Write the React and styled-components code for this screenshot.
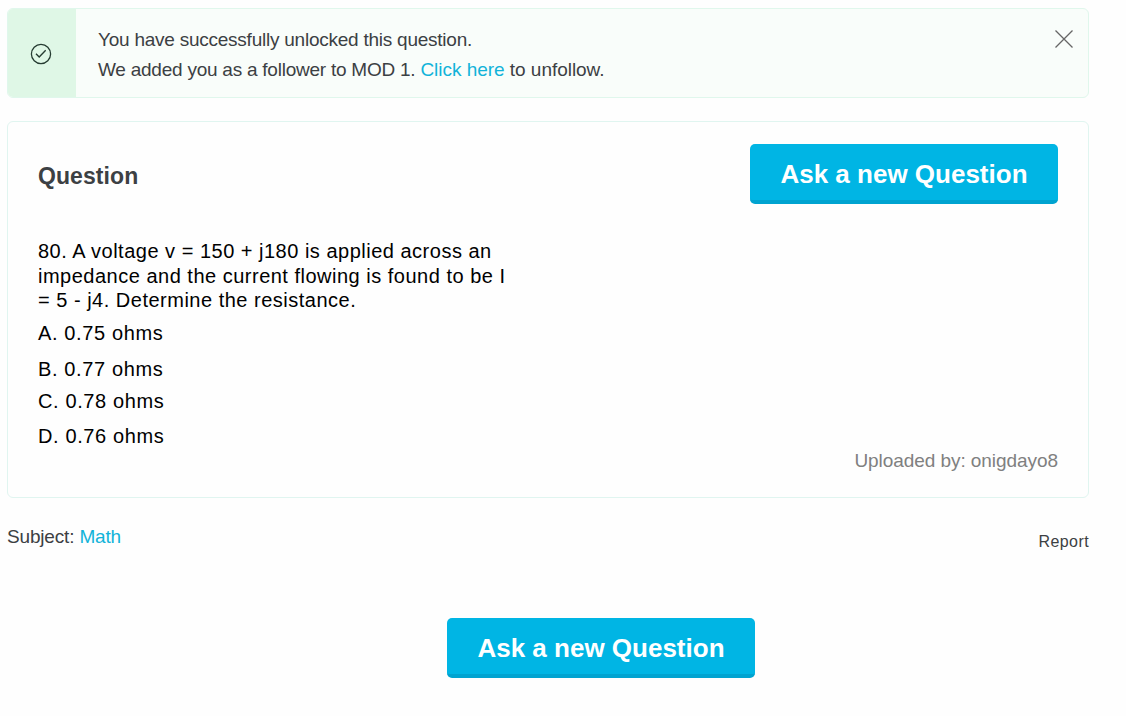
import React, { useState } from 'react'
import styled, { createGlobalStyle } from 'styled-components'

const GlobalStyle = createGlobalStyle`
  * {
    box-sizing: border-box;
  }
  body {
    margin: 0;
    background-color: #fefefe;
    color: #3c4043;
    font-family: 'Liberation Sans', Arial, sans-serif;
    font-size: 19px;
  }
`
const Page = styled.main`
  width: 1082px;
  margin: 8px 0 0 7px;
`
const Alert = styled.section`
  display: flex;
  height: 90px;
  margin-bottom: 23px;
  border: 1px solid #e0f7ec;
  border-radius: 6px;
  background-color: #f9fdfa;
  overflow: hidden;
`
const AlertIcon = styled.div`
  display: flex;
  align-items: center;
  justify-content: center;
  width: 68px;
  padding: 2px 2px 0 0;
  background-color: #dff7e6;
`
const AlertText = styled.div`
  flex: 1;
  padding: 16px 0 0 22px;
`
const AlertLine = styled.p`
  margin: 0;
  line-height: 30px;
  letter-spacing: -0.24px;
  white-space: nowrap;
`
const AlertAction = styled.span`
  letter-spacing: -0.03px;
`
const Link = styled.a`
  color: #11b3d9;
  text-decoration: none;
`
const CloseButton = styled.button`
  align-self: flex-start;
  display: flex;
  margin: 20px 14px 0 0;
  padding: 0;
  border: 0;
  background: none;
  cursor: pointer;
`
const Card = styled.section`
  height: 377px;
  padding: 22px 30px 0;
  border: 1px solid #e0f5f0;
  border-radius: 6px;
  background-color: #fefefe;
`
const CardHeader = styled.header`
  display: flex;
  justify-content: space-between;
  align-items: center;
  height: 60px;
`
const Title = styled.h2`
  margin: 4px 0 0;
  font-size: 23px;
  line-height: 28px;
  letter-spacing: 0.08px;
`
const AskButton = styled.button`
  width: 308px;
  height: 60px;
  padding: 4px 0 0;
  border: 0;
  border-bottom: 4px solid #00a3d0;
  border-radius: 5px;
  background-color: #00b5e4;
  color: #fff;
  font-family: inherit;
  font-size: 26px;
  font-weight: bold;
  cursor: pointer;
`
const QuestionBody = styled.div`
  width: 480px;
  height: 215px;
  padding-top: 35px;
  color: #000;
  font-size: 20px;
  letter-spacing: 0.5px;
`
const QuestionText = styled.p`
  margin: 0 0 8px;
  line-height: 24.5px;
`
const Options = styled.ul`
  display: flex;
  flex-direction: column;
  margin: 0;
  padding: 0;
  list-style: none;
`
const Option = styled.li`
  height: ${({ $height }) => $height}px;
  line-height: 24px;
  letter-spacing: 0.62px;
`
const UploadedBy = styled.p`
  margin: 30px 0 0;
  color: #808080;
  line-height: 24px;
  letter-spacing: -0.06px;
  text-align: right;
`
const Meta = styled.div`
  display: flex;
  justify-content: space-between;
  height: 120px;
  padding-top: 27px;
`
const Subject = styled.span`
  line-height: 24px;
  letter-spacing: -0.17px;
`
const Report = styled.span`
  padding-top: 5px;
  font-size: 16px;
  line-height: 24px;
  letter-spacing: 0.4px;
`
const Footer = styled.footer`
  display: flex;
  justify-content: center;
  padding-left: 106px;
`

const options = [
  { text: 'A. 0.75 ohms', height: 36 },
  { text: 'B. 0.77 ohms', height: 32 },
  { text: 'C. 0.78 ohms', height: 35 },
  { text: 'D. 0.76 ohms', height: 24 },
]

function CheckIcon() {
  return (
    <svg width="22" height="22" viewBox="0 0 22 22" fill="none" stroke="#263c32">
      <circle cx="11" cy="11" r="9.6" strokeWidth="1.3" />
      <path d="M6 10.8l3.2 3.1 6.5-6.6" strokeWidth="1.4" />
    </svg>
  )
}

function CloseIcon() {
  return (
    <svg width="20" height="20" viewBox="0 0 20 20" fill="none" stroke="#666">
      <path d="M1.5 1.5l17 17M18.5 1.5l-17 17" strokeWidth="1.3" />
    </svg>
  )
}

export default function App() {
  const [showAlert, setShowAlert] = useState(true)

  return (
    <>
      <GlobalStyle />
      <Page>
        {showAlert && (
          <Alert>
            <AlertIcon>
              <CheckIcon />
            </AlertIcon>
            <AlertText>
              <AlertLine>
                You have successfully unlocked this question.
              </AlertLine>
              <AlertLine>
                We added you as a follower to MOD 1.{' '}
                <AlertAction>
                  <Link>Click here</Link> to unfollow.
                </AlertAction>
              </AlertLine>
            </AlertText>
            <CloseButton aria-label="Close" onClick={() => setShowAlert(false)}>
              <CloseIcon />
            </CloseButton>
          </Alert>
        )}
        <Card>
          <CardHeader>
            <Title>Question</Title>
            <AskButton>Ask a new Question</AskButton>
          </CardHeader>
          <QuestionBody>
            <QuestionText>
              80. A voltage v = 150 + j180 is applied across an
              <br />
              impedance and the current flowing is found to be I
              <br />= 5 - j4. Determine the resistance.
            </QuestionText>
            <Options>
              {options.map((option) => (
                <Option key={option.text} $height={option.height}>
                  {option.text}
                </Option>
              ))}
            </Options>
          </QuestionBody>
          <UploadedBy>Uploaded by: onigdayo8</UploadedBy>
        </Card>
        <Meta>
          <Subject>
            Subject: <Link>Math</Link>
          </Subject>
          <Report>Report</Report>
        </Meta>
        <Footer>
          <AskButton>Ask a new Question</AskButton>
        </Footer>
      </Page>
    </>
  )
}
